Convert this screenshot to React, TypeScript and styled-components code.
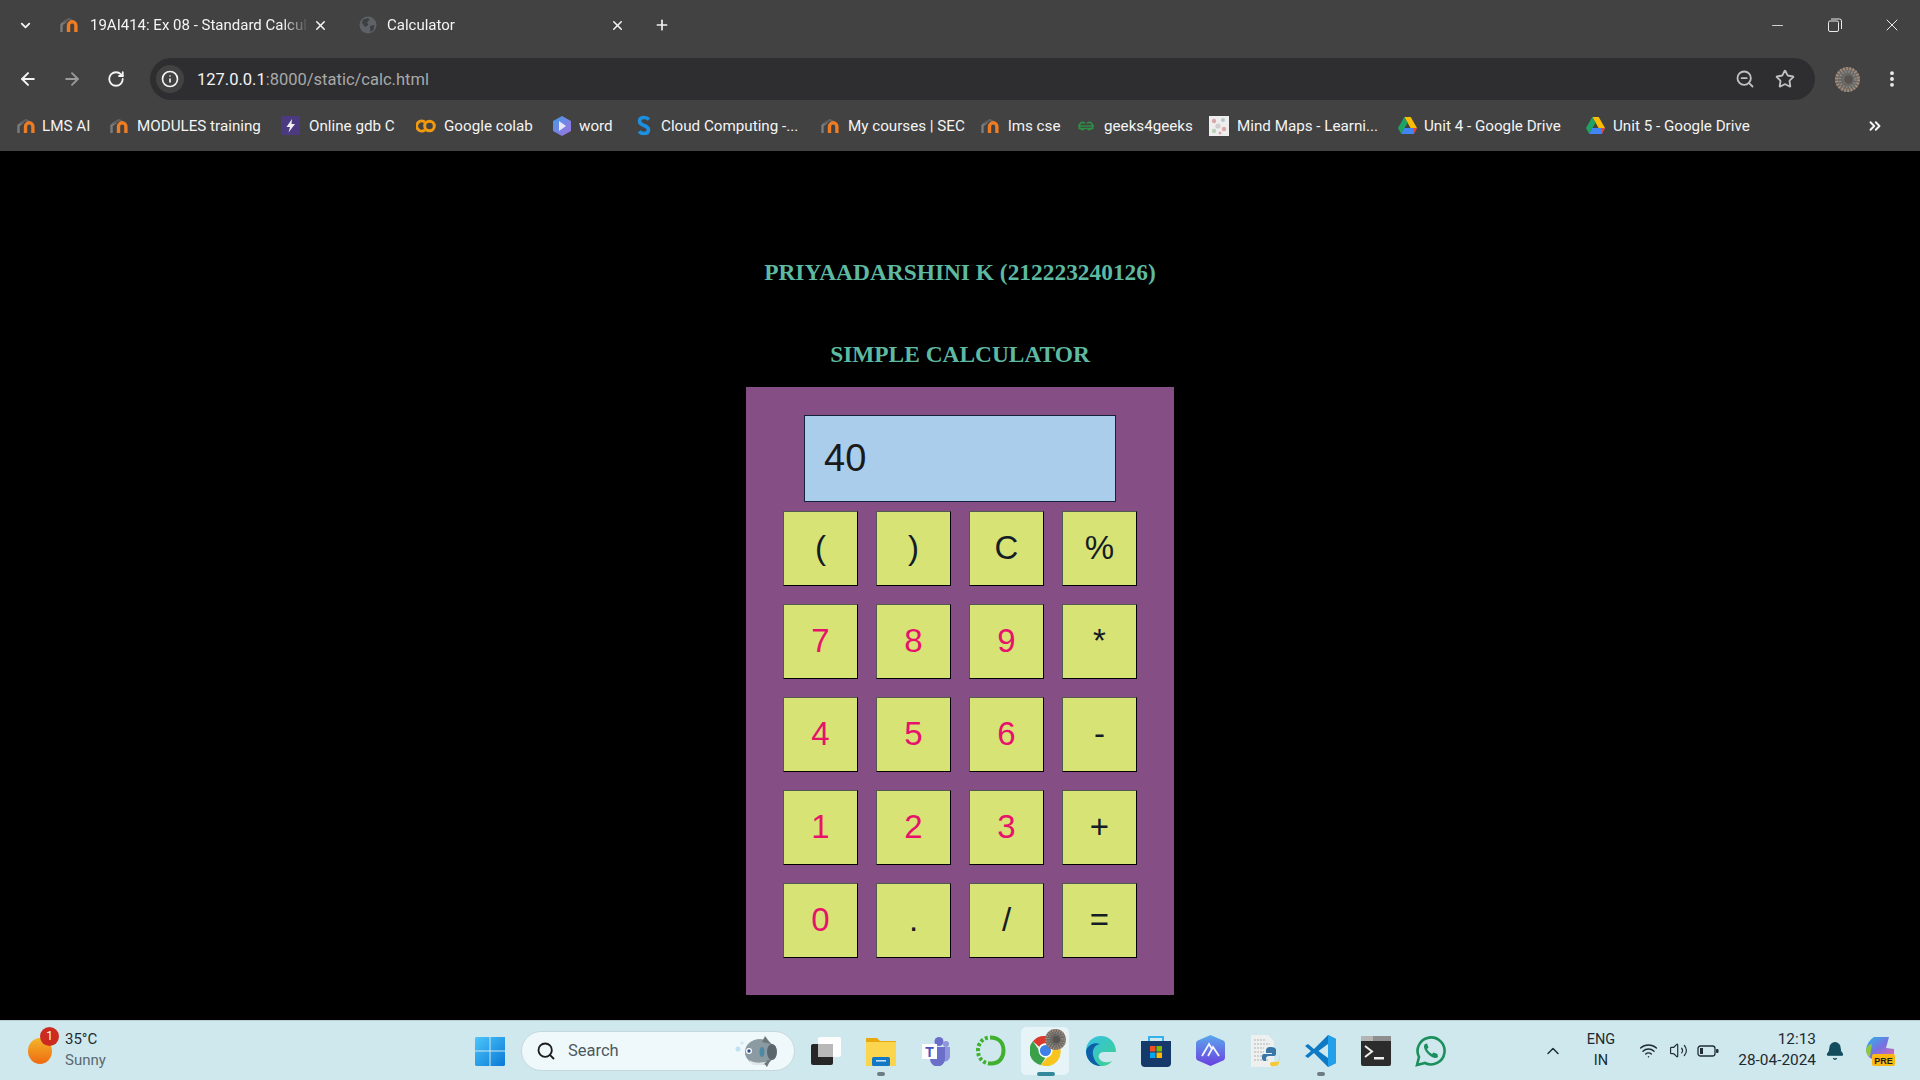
import React from "react";
import styled, { createGlobalStyle } from "styled-components";
import {
  ArrowLeft, ArrowRight, Bell, ChevronDown, ChevronUp, ChevronsRight, EllipsisVertical,
  Info, Minus, Plus, RotateCw, Search, Star, Volume2, Wifi, X, ZoomOut,
} from "lucide-react";

const Global = createGlobalStyle`
  html, body { margin: 0; padding: 0; background: #000; overflow: hidden; }
  * { box-sizing: border-box; }
`;

const Page = styled.div`
  width: 1920px; height: 1080px; display: flex; flex-direction: column;
  font-family: Roboto, "Liberation Sans", sans-serif;
`;

/* ---------- browser chrome ---------- */
const TabStrip = styled.div`
  height: 58px; background: #424242; display: flex; align-items: center; color: #f2f2f2; padding-bottom: 8px;
`;
const TabMenu = styled.div`
  width: 57px; padding-right: 7px; display: flex; justify-content: center; align-items: center;
`;
const Tab = styled.div<{ $w: number }>`
  width: ${p => p.$w}px; height: 30px; padding: 0 27px 0 2px; display: flex; align-items: center;
`;
const TabIcon = styled.div<{ $slot: number }>`
  width: ${p => p.$slot}px; flex: none; display: flex; align-items: center;
`;
const TabTitle = styled.div`
  flex: 1; min-width: 0; white-space: nowrap; overflow: hidden; font-size: 15px; color: #f4f4f4;
  -webkit-mask-image: linear-gradient(to right, #000 88%, transparent 100%);
`;
const TabClose = styled.div`
  width: 20px; flex: none; display: flex; justify-content: center; margin-left: 1px;
`;
const NewTab = styled.div`
  width: 16px; display: flex; justify-content: center;
`;
const WinControls = styled.div`
  margin-left: auto; display: flex; color: #eaeaea;
`;
const WinButton = styled.div`
  width: 57px; height: 30px; display: flex; align-items: center; justify-content: center;
`;
const Toolbar = styled.div`
  height: 42px; background: #424242; display: flex; align-items: center; padding-left: 6px; color: #f0f0f0;
`;
const NavButton = styled.div<{ $dim?: boolean }>`
  width: 44px; display: flex; justify-content: center; color: ${p => (p.$dim ? "#9a9a9a" : "#f4f4f4")};
`;
const AddressBar = styled.div`
  margin-left: 12px; width: 1665px; height: 42px; border-radius: 21px; background: #2e2e30;
  display: flex; align-items: center; padding: 0 10px 0 6px;
`;
const InfoChip = styled.div`
  width: 28px; height: 28px; border-radius: 50%; background: #424242; display: flex;
  align-items: center; justify-content: center; color: #f4f4f4;
`;
const Url = styled.div`
  margin-left: 13px; font-size: 16.5px; color: #a9a9a9; flex: 1;
  span { color: #f4f4f4; }
`;
const BarAction = styled.div`
  width: 40px; display: flex; justify-content: center; color: #c0c0c0;
`;
const ProfileSlot = styled.div`
  margin-left: 10px; width: 44px; display: flex; justify-content: center;
`;
const MenuSlot = styled.div`
  width: 45px; display: flex; justify-content: center; color: #f0f0f0;
`;
const Bookmarks = styled.div`
  height: 51px; background: #424242; display: flex; align-items: center; padding-left: 16px;
`;
const Bookmark = styled.div<{ $w: number }>`
  width: ${p => p.$w}px; flex: none; display: flex; align-items: center; white-space: nowrap;
  font-size: 15.2px; color: #f4f4f4;
`;
const BookmarkIcon = styled.div<{ $slot?: number }>`
  width: ${p => p.$slot ?? 27}px; flex: none; display: flex; align-items: center;
`;
const BookmarkMore = styled.div`
  margin-left: auto; width: 90px; display: flex; justify-content: center; color: #f4f4f4;
`;

/* ---------- page content ---------- */
const Main = styled.main`
  flex: 1; background: #000; display: flex; flex-direction: column; align-items: center; padding-top: 101px;
`;
const Heading = styled.h2`
  margin: 0; height: 40px; line-height: 40px; font-family: "Liberation Serif", serif;
  font-size: 23.4px; font-weight: 700; color: #5db9a1;
`;
const SubHeading = styled(Heading)`
  margin: 42px 0 13px;
`;
const Calculator = styled.div`
  width: 428px; height: 608px; background: #854f86; padding-top: 28px; display: flex;
  flex-direction: column; align-items: center;
`;
const Display = styled.div`
  width: 312px; height: 87px; background: #abcdec; border: 1px solid #15233a; display: flex;
  align-items: center; padding-left: 19px; margin-bottom: 9px; font-family: "Liberation Sans", sans-serif;
  font-size: 38px; color: #1a1a1a;
`;
const Keys = styled.div`
  display: grid; grid-template-columns: repeat(4, 75px); grid-auto-rows: 75px; gap: 18px;
`;
const Key = styled.button<{ $digit?: boolean }>`
  padding: 0 0 2px; margin: 0; background: #d8e375; border: 1px solid;
  border-color: #555a50 #000 #000 #555a50; font-family: "Liberation Sans", sans-serif;
  font-size: 33px; color: ${p => (p.$digit ? "#e6126b" : "#141c26")};
`;

/* ---------- taskbar ---------- */
const Taskbar = styled.footer`
  height: 60px; background: #cfe8ee; border-top: 1px solid #b9ccd1; display: flex; align-items: center;
  color: #1d2b30;
`;
const Weather = styled.div`
  width: 462px; padding-left: 28px; display: flex; align-items: center;
`;
const WeatherIcon = styled.div`
  position: relative; width: 37px; height: 32px; flex: none; display: flex; align-items: center;
`;
const Badge = styled.div`
  position: absolute; left: 12px; top: -8px; width: 19px; height: 19px; border-radius: 50%;
  background: #cc2b20; color: #fff; font-size: 12px; display: flex; align-items: center; justify-content: center;
`;
const WeatherText = styled.div`
  font-size: 15px; line-height: 21px; margin-top: -2px;
`;
const Muted = styled.div`
  color: #5a6a70;
`;
const Center = styled.div`
  display: flex; align-items: center;
`;
const AppSlot = styled.div`
  width: 55px; height: 48px; display: flex; align-items: center; justify-content: center; position: relative;
`;
const ActiveSlot = styled(AppSlot)`
  &::before {
    content: ""; position: absolute; left: 3px; right: 4px; top: 0; bottom: 0; border-radius: 5px;
    background: #e6f3f7;
  }
  > svg { position: relative; }
`;
const Dot = styled.div<{ $active?: boolean }>`
  position: absolute; bottom: -1px; left: 50%; transform: translateX(-50%); height: 4px; border-radius: 2px;
  width: ${p => (p.$active ? 18 : 8)}px; background: ${p => (p.$active ? "#33899c" : "#6d7c82")};
`;
const AvatarBadge = styled.div`
  position: absolute; left: 27px; top: 2px;
`;
const SearchPill = styled.div`
  margin: 0 3px 0 4px; width: 274px; height: 40px; border-radius: 20px; background: #eff8fa;
  border: 1px solid #c5d8dc; display: flex; align-items: center; padding: 0 15px 0 14px; font-size: 16.500px; color: #4c5a60;
`;
const SearchLabel = styled.span`
  margin-left: 12px; flex: 1;
`;
const Tray = styled.div`
  margin-left: auto; padding-right: 25px; display: flex; align-items: center;
`;
const TraySlot = styled.div`
  width: 30px; display: flex; justify-content: center; color: #1f2f35;
`;
const Lang = styled.div`
  margin: -2px 7px 0 8px; width: 50px; text-align: center; font-size: 14.500px; line-height: 21px;
`;
const Clock = styled.div`
  width: 93px; margin-top: -2px; text-align: right; font-size: 15.400px; line-height: 21px; white-space: nowrap;
`;
const BellSlot = styled(TraySlot)`
  margin-left: 4px; color: #134c5c;
`;
const CopilotSlot = styled.div`
  margin-left: 16px; width: 29px; display: flex;
`;

/* ---------- drawings ---------- */
const Moodle = () => (
  <svg width="21" height="16" viewBox="0 0 21 16" fill="none">
    <path d="M2.500 15V7.500L7 4" stroke="#7a7a7a" strokeWidth="2.500" />
    <path d="M4 5.500 10 2l3 1.500" stroke="#5f5f5f" strokeWidth="2" />
    <path d="M9.500 15V8.500a3.700 3.700 0 0 1 7.400 0V15" stroke="#ee7c22" strokeWidth="3.400" />
  </svg>
);
const Globe = () => (
  <svg width="18" height="18" viewBox="0 0 18 18">
    <circle cx="9" cy="9" r="8.500" fill="#5e6266" />
    <path d="M4 3.500 9 2l1.500 2L8 6.500 9.500 9 6 11 3 7zM11 10l4.500-1-1 5-3 2z" fill="#3d4043" />
  </svg>
);
const Bolt = () => (
  <svg width="19" height="19" viewBox="0 0 19 19">
    <rect width="19" height="19" fill="#4b3a80" />
    <path d="M11 3 5.500 11H9l-1.500 5.500L14 8h-3.500z" fill="#f1f1f1" />
  </svg>
);
const Colab = () => (
  <svg width="20" height="14" viewBox="0 0 20 14" fill="none" stroke="#f29a0e" strokeWidth="3">
    <path d="M9 3.200a5 5 0 1 0 0 7.600" />
    <circle cx="13.500" cy="7" r="4.800" />
  </svg>
);
const WordIcon = () => (
  <svg width="18" height="20" viewBox="0 0 18 20">
    <defs>
      <linearGradient id="wd" x1="0" y1="0" x2="1" y2="1">
        <stop offset="0" stopColor="#3f9be8" /><stop offset="1" stopColor="#a571e0" />
      </linearGradient>
    </defs>
    <path d="M9 0 18 5v10l-9 5-9-5V5z" fill="url(#wd)" />
    <path d="M6 5l7 5-7 5z" fill="#e9e6f7" />
  </svg>
);
const SIcon = () => (
  <svg width="14" height="21" viewBox="0 0 14 21" fill="none">
    <path d="M12 4.500Q10 2.500 7 2.500 2.500 2.500 2.500 6 2.500 9 7 10.500t4.500 4.500q0 3.500-4.500 3.500-3 0-5-2" stroke="#1c8fe0" strokeWidth="3.600" />
  </svg>
);
const Geeks = () => (
  <svg width="18" height="12" viewBox="0 0 18 12" fill="none" stroke="#2f8d46" strokeWidth="1.500">
    <path d="M8 3.500A3.400 3.400 0 1 0 8 8.500H1.500M10 3.500a3.400 3.400 0 1 1 0 5h6.500" />
    <path d="M1 6h16" />
  </svg>
);
const MindMap = () => (
  <svg width="20" height="20" viewBox="0 0 20 20">
    <rect width="20" height="20" fill="#eeeeee" />
    <circle cx="5" cy="5" r="2.200" fill="#d9a7a7" /><circle cx="14" cy="4" r="2" fill="#b9c6c9" />
    <circle cx="9" cy="10" r="2.600" fill="#cfcfcf" /><circle cx="15" cy="13" r="2.200" fill="#e0a9a9" />
    <circle cx="5" cy="15" r="2.200" fill="#bcd0b8" /><circle cx="11" cy="17" r="1.500" fill="#d9a7a7" />
  </svg>
);
const Drive = () => (
  <svg width="19" height="17" viewBox="0 0 19 17">
    <path d="M6.300 0h6.400l6.300 11h-6.400z" fill="#fbbc04" />
    <path d="M6.300 0 0 11l3.200 6 6.300-11z" fill="#1ea362" />
    <path d="M3.200 17h12.600l3.200-6H6.400z" fill="#4285f4" />
    <path d="M15.800 17 19 11h-4z" fill="#ea4335" />
  </svg>
);
const Avatar = ({ size }: { size: number }) => (
  <svg width={size} height={size} viewBox="0 0 24 24">
    <circle cx="12" cy="12" r="12" fill="#6d6762" />
    <circle cx="12" cy="12" r="10.500" fill="none" stroke="#a58d7c" strokeWidth="3" strokeDasharray="1.500 1.500" />
    <circle cx="12" cy="12" r="7.500" fill="none" stroke="#86969a" strokeWidth="2" strokeDasharray="1 2" />
    <circle cx="13" cy="12" r="4" fill="#565350" />
  </svg>
);
const WinLogo = () => (
  <svg width="30" height="30" viewBox="0 0 30 30">
    <defs>
      <linearGradient id="wl" x1="0" y1="0" x2="1" y2="1">
        <stop offset="0" stopColor="#4cc6fb" /><stop offset="1" stopColor="#0a78d6" />
      </linearGradient>
    </defs>
    <path d="M1 1h13.500v13.500H0V2zM15.500 1H30v13.500H15.500zM0 15.500h14.500V30H1l-1-1zM15.500 15.500H30V29l-1 1H15.500z" fill="url(#wl)" />
  </svg>
);
const TaskView = () => (
  <svg width="30" height="30" viewBox="0 0 30 30">
    <rect x="0" y="8" width="22" height="21" rx="2" fill="#262626" />
    <rect x="7" y="1" width="23" height="20" rx="2" fill="#fdfdfd" />
    <rect x="7" y="8" width="15" height="13" fill="#b8b8b8" />
  </svg>
);
const Explorer = () => (
  <svg width="30" height="30" viewBox="0 0 30 30">
    <path d="M0 2h11l3 3h16v24H0z" fill="#e8a90f" />
    <rect y="6" width="30" height="24" fill="#fbd54e" />
    <rect x="6" y="21" width="18" height="9" rx="1.500" fill="#1477c4" />
    <rect x="10" y="24" width="10" height="1.600" fill="#bfe0f7" />
  </svg>
);
const Teams = () => (
  <svg width="28" height="30" viewBox="0 0 28 30">
    <circle cx="17" cy="5.500" r="4.500" fill="#6b6fc9" /><circle cx="24" cy="8" r="3" fill="#8f95dd" />
    <path d="M20 11h8v10a5 5 0 0 1-7 4z" fill="#8f95dd" />
    <path d="M8 11h15v12a7 7 0 0 1-15 0z" fill="#6b6fc9" />
    <rect x="0" y="8" width="15" height="15" fill="#fff" />
    <text x="7.500" y="20.500" textAnchor="middle" fontFamily="Liberation Sans" fontWeight="700" fontSize="14" fill="#4b53bc">T</text>
  </svg>
);
const Ring = () => (
  <svg width="31" height="31" viewBox="0 0 31 31" fill="none">
    <path d="M15 2.500C24 2.500 28.500 8 28.500 15.500S24 28.500 16 28.500" stroke="#41b02f" strokeWidth="4" />
    <path d="M16 28.500C8 28.500 3 23 3 15.500S8 3 14 2.500" stroke="#41b02f" strokeWidth="4" strokeDasharray="3 2" />
  </svg>
);
const Chrome = () => (
  <svg width="31" height="31" viewBox="0 0 32 32">
    <path d="M16 1a15 15 0 0 1 13 7.500H16a7.500 7.500 0 0 0-6.500 3.750L3 6.500A15 15 0 0 1 16 1z" fill="#d93a2e" />
    <path d="M3 6.500l6.500 9.500a7.500 7.500 0 0 0 6.500 7.500L11 31A15 15 0 0 1 3 6.500z" fill="#3aa14a" />
    <path d="M29 8.500A15 15 0 0 1 11 31l7-8a7.500 7.500 0 0 0 5-7 7.500 7.500 0 0 0-3-7.500z" fill="#f7c51e" />
    <circle cx="16" cy="16" r="6.500" fill="#3f7fe8" stroke="#fff" strokeWidth="1.500" />
  </svg>
);
const Edge = () => (
  <svg width="30" height="30" viewBox="0 0 30 30">
    <defs>
      <linearGradient id="eg" x1="0" y1="0" x2="1" y2="1">
        <stop offset="0" stopColor="#35c1e8" /><stop offset="1" stopColor="#3fd08a" />
      </linearGradient>
    </defs>
    <path d="M15 0C6 0 0 7 0 15c0 9 7 15 15 15 5 0 9-2 11-5-4 2-11 2-13-3-1-3 1-6 5-6h12C30 7 24 0 15 0z" fill="url(#eg)" />
    <path d="M0 15C2 8 9 6 14 8c-5 1-8 5-7 11 1 5 4 9 8 11C7 30 0 24 0 15z" fill="#0c5fa8" />
  </svg>
);
const Store = () => (
  <svg width="30" height="32" viewBox="0 0 30 32">
    <path d="M8 6V2h14v4" fill="none" stroke="#35b1ea" strokeWidth="2" />
    <path d="M0 6h30v22a4 4 0 0 1-4 4H4a4 4 0 0 1-4-4z" fill="#16396c" />
    <rect x="9" y="11" width="5.500" height="5.500" fill="#f25022" /><rect x="15.500" y="11" width="5.500" height="5.500" fill="#7fba00" />
    <rect x="9" y="17.500" width="5.500" height="5.500" fill="#00a4ef" /><rect x="15.500" y="17.500" width="5.500" height="5.500" fill="#ffb900" />
  </svg>
);
const Hex = () => (
  <svg width="29" height="31" viewBox="0 0 29 31">
    <defs>
      <linearGradient id="hx" x1="0" y1="0" x2="0" y2="1">
        <stop offset="0" stopColor="#5aa8ec" /><stop offset="1" stopColor="#6a3fe0" />
      </linearGradient>
    </defs>
    <path d="M14.500 0 26 5a4 4 0 0 1 3 4v13a4 4 0 0 1-3 4l-11.500 5L3 26a4 4 0 0 1-3-4V9a4 4 0 0 1 3-4z" fill="url(#hx)" />
    <path d="M6 21 13 9l3 5M12 21l5-9 6 9" fill="none" stroke="#f4f4ff" strokeWidth="1.800" />
  </svg>
);
const PyFile = () => (
  <svg width="29" height="32" viewBox="0 0 29 32">
    <path d="M0 0h17l6 6v26H0z" fill="#eef0f0" />
    <path d="M3 5h12M3 9h16M3 13h10M3 17h10M3 21h10M3 25h14" stroke="#c5c8c8" strokeWidth="1.500" strokeDasharray="2 1" />
    <path d="M20 12c-4 0-5 1.500-5 4v2h6v1h-8c-2 0-2 2-2 3v1c0 2 1 3 3 3h1v-2c0-2 1-3 3-3h5c1 0 2-1 2-2v-4c0-2-2-3-5-3z" fill="#3a77a8" />
    <path d="M29 20v3c0 3-2 4-4 4h-2c-3 0-4 0-4 2s2 3 5 2c2 0 4-1 4-3v-2z" fill="#f6c93a" />
  </svg>
);
const VSCode = () => (
  <svg width="31" height="32" viewBox="0 0 31 32">
    <path d="M23 0 31 4v24l-8 4L9 18l-6 5-3-2 6-5-6-5 3-2 6 5z" fill="#0f7ac4" />
    <path d="M23 0 31 4v24l-8 4z" fill="#22a1ea" />
    <path d="M23 9 13.500 16 23 23z" fill="#cfe8ee" />
  </svg>
);
const Terminal = () => (
  <svg width="30" height="30" viewBox="0 0 30 30">
    <rect width="30" height="30" rx="2" fill="#2c2c2c" />
    <rect width="30" height="5" fill="#8e8e8e" /><rect width="12" height="5" fill="#b4b4b4" />
    <path d="M4 10l7 5.500-7 5.500" fill="none" stroke="#eee" strokeWidth="2" />
    <rect x="13" y="21" width="10" height="2.500" fill="#eee" />
  </svg>
);
const WhatsApp = () => (
  <svg width="31" height="32" viewBox="0 0 31 32" fill="none">
    <path d="M2 30l2-8A13.500 13.500 0 1 1 10 28z" stroke="#1b8f5c" strokeWidth="2.600" />
    <path d="M10 9c-2 2-1 6 3 10s8 5 10 3l-.500-3-4-1.500-1.500 1.500c-2-1-4-3-5-5l1.500-1.500-1.500-4z" fill="#1b8f5c" />
  </svg>
);
const Fish = () => (
  <svg width="44" height="32" viewBox="0 0 44 32">
    <circle cx="3" cy="14" r="2.500" fill="#bfe3f0" /><circle cx="7" cy="8" r="1.800" fill="#cfeaf4" />
    <ellipse cx="25" cy="17" rx="15" ry="13" fill="#8c9ba1" />
    <path d="M30 1l6 8-9-2zM32 32l4-8-8 3z" fill="#6c777b" />
    <ellipse cx="37" cy="17" rx="5" ry="8" fill="#5a666c" />
    <circle cx="14" cy="16" r="3" fill="#fff" /><circle cx="14" cy="16" r="1.700" fill="#29508f" />
    <ellipse cx="27" cy="17" rx="2.500" ry="5" fill="#4d8aa6" />
    <path d="M14 25q8 5 18 1l-4 4H18z" fill="#dfe6e8" />
  </svg>
);
const RestoreIcon = () => (
  <svg width="14" height="14" viewBox="0 0 14 14" fill="none" stroke="#eaeaea" strokeWidth="1">
    <rect x=".5" y="3" width="10" height="10.500" rx="1.500" />
    <path d="M3 1h8.500A2 2 0 0 1 13.500 3v8" />
  </svg>
);
const Battery = () => (
  <svg width="22" height="14" viewBox="0 0 22 14" fill="none">
    <rect x="1" y="2" width="17" height="10" rx="2.500" stroke="#1f2f35" strokeWidth="1.300" />
    <rect x="3" y="4" width="3" height="6" fill="#1f2f35" />
    <rect x="19" y="5" width="2.500" height="4" rx="1" fill="#1f2f35" />
  </svg>
);
const Copilot = () => (
  <svg width="29" height="30" viewBox="0 0 29 30">
    <defs>
      <linearGradient id="cp" x1="0" y1="0" x2="1" y2="1">
        <stop offset="0" stopColor="#28b7e8" /><stop offset=".5" stopColor="#7a6fe0" /><stop offset="1" stopColor="#f06aa8" />
      </linearGradient>
    </defs>
    <path d="M8 1h15l-3 11 8 1q1 8-4 10H6Q1 21 0 14 1 5 8 1z" fill="url(#cp)" />
    <path d="M0 14q1-5 6-6l-2 13Q1 20 0 14z" fill="#8fc93a" />
    <rect x="6" y="18" width="23" height="12" rx="2" fill="#f9b912" />
    <text x="17.500" y="27.500" textAnchor="middle" fontFamily="Liberation Sans" fontWeight="700" fontSize="9" fill="#1d1d1d">PRE</text>
  </svg>
);

const bookmarks = [
  { w: 93, t: "LMS AI", i: <Moodle />, s: 26 },
  { w: 172, t: "MODULES training", i: <Moodle />, s: 28 },
  { w: 135, t: "Online gdb C", i: <Bolt />, s: 28 },
  { w: 137, t: "Google colab", i: <Colab />, s: 28 },
  { w: 84, t: "word", i: <WordIcon />, s: 26 },
  { w: 183, t: "Cloud Computing -...", i: <SIcon />, s: 24 },
  { w: 160, t: "My courses | SEC", i: <Moodle />, s: 28 },
  { w: 97, t: "lms cse", i: <Moodle />, s: 28 },
  { w: 132, t: "geeks4geeks", i: <Geeks />, s: 27 },
  { w: 189, t: "Mind Maps - Learni...", i: <MindMap />, s: 28 },
  { w: 188, t: "Unit 4 - Google Drive", i: <Drive />, s: 26 },
  { w: 175, t: "Unit 5 - Google Drive", i: <Drive />, s: 27 },
];

const keys = ["(", ")", "C", "%", "7", "8", "9", "*", "4", "5", "6", "-", "1", "2", "3", "+", "0", ".", "/", "="];

export default function App() {
  return (
    <Page>
      <Global />
      <TabStrip>
        <TabMenu><ChevronDown size={15} strokeWidth={3} /></TabMenu>
        <Tab $w={300}>
          <TabIcon $slot={31}><Moodle /></TabIcon>
          <TabTitle>19AI414: Ex 08 - Standard Calculator</TabTitle>
          <TabClose><X size={15} strokeWidth={2.5} /></TabClose>
        </Tab>
        <Tab $w={297}>
          <TabIcon $slot={28}><Globe /></TabIcon>
          <TabTitle>Calculator</TabTitle>
          <TabClose><X size={15} strokeWidth={2.5} /></TabClose>
        </Tab>
        <NewTab><Plus size={18} strokeWidth={2.5} /></NewTab>
        <WinControls>
          <WinButton><Minus size={17} strokeWidth={1.2} /></WinButton>
          <WinButton><RestoreIcon /></WinButton>
          <WinButton><X size={20} strokeWidth={1.2} /></WinButton>
        </WinControls>
      </TabStrip>
      <Toolbar>
        <NavButton><ArrowLeft size={20} strokeWidth={2.4} /></NavButton>
        <NavButton $dim><ArrowRight size={20} strokeWidth={2.2} /></NavButton>
        <NavButton><RotateCw size={18} strokeWidth={2.4} /></NavButton>
        <AddressBar>
          <InfoChip><Info size={18} strokeWidth={2.2} /></InfoChip>
          <Url><span>127.0.0.1</span>:8000/static/calc.html</Url>
          <BarAction><ZoomOut size={20} strokeWidth={2.2} /></BarAction>
          <BarAction><Star size={20} strokeWidth={2.2} /></BarAction>
        </AddressBar>
        <ProfileSlot><Avatar size={25} /></ProfileSlot>
        <MenuSlot><EllipsisVertical size={20} strokeWidth={2.6} /></MenuSlot>
      </Toolbar>
      <Bookmarks>
        {bookmarks.map(b => (
          <Bookmark key={b.t + b.w} $w={b.w}>
            <BookmarkIcon $slot={b.s}>{b.i}</BookmarkIcon>
            {b.t}
          </Bookmark>
        ))}
        <BookmarkMore><ChevronsRight size={18} strokeWidth={2.6} /></BookmarkMore>
      </Bookmarks>
      <Main>
        <Heading>PRIYAADARSHINI K (212223240126)</Heading>
        <SubHeading>SIMPLE CALCULATOR</SubHeading>
        <Calculator>
          <Display>40</Display>
          <Keys>
            {keys.map(k => (
              <Key key={k} $digit={/[0-9]/.test(k)}>{k}</Key>
            ))}
          </Keys>
        </Calculator>
      </Main>
      <Taskbar>
        <Weather>
          <WeatherIcon>
            <svg width="24" height="26" viewBox="0 0 24 26">
              <defs>
                <linearGradient id="sun" x1="0" y1="0" x2="0" y2="1">
                  <stop offset="0" stopColor="#f4b62a" /><stop offset="1" stopColor="#ee6a10" />
                </linearGradient>
              </defs>
              <ellipse cx="12" cy="13" rx="12" ry="13" fill="url(#sun)" />
            </svg>
            <Badge>1</Badge>
          </WeatherIcon>
          <WeatherText>35°C<Muted>Sunny</Muted></WeatherText>
        </Weather>
        <Center>
          <AppSlot><WinLogo /></AppSlot>
          <SearchPill>
            <Search size={20} strokeWidth={2.2} color="#1c1c1c" />
            <SearchLabel>Search</SearchLabel>
            <Fish />
          </SearchPill>
          <AppSlot><TaskView /></AppSlot>
          <AppSlot><Explorer /><Dot /></AppSlot>
          <AppSlot><Teams /></AppSlot>
          <AppSlot><Ring /></AppSlot>
          <ActiveSlot>
            <Chrome />
            <AvatarBadge><Avatar size={21} /></AvatarBadge>
            <Dot $active />
          </ActiveSlot>
          <AppSlot><Edge /></AppSlot>
          <AppSlot><Store /></AppSlot>
          <AppSlot><Hex /></AppSlot>
          <AppSlot><PyFile /></AppSlot>
          <AppSlot><VSCode /><Dot /></AppSlot>
          <AppSlot><Terminal /></AppSlot>
          <AppSlot><WhatsApp /></AppSlot>
        </Center>
        <Tray>
          <TraySlot><ChevronUp size={20} strokeWidth={1.8} /></TraySlot>
          <Lang>ENG<br />IN</Lang>
          <TraySlot><Wifi size={19} strokeWidth={1.8} /></TraySlot>
          <TraySlot><Volume2 size={19} strokeWidth={1.5} /></TraySlot>
          <TraySlot><Battery /></TraySlot>
          <Clock>12:13<br />28-04-2024</Clock>
          <BellSlot><Bell size={20} fill="#134c5c" strokeWidth={1.5} /></BellSlot>
          <CopilotSlot><Copilot /></CopilotSlot>
        </Tray>
      </Taskbar>
    </Page>
  );
}
